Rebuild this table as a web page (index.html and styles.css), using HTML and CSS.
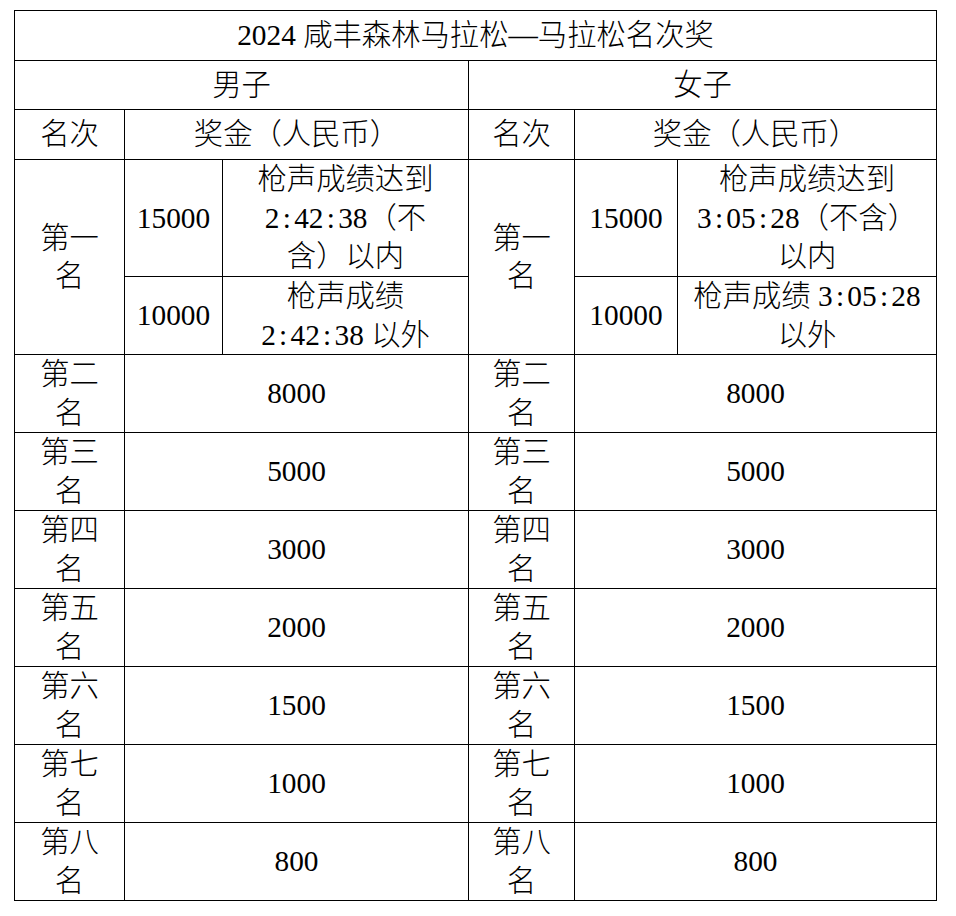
FILE: index.html
```html
<!DOCTYPE html>
<html lang="zh-CN">
<head>
<meta charset="utf-8">
<title>2024 咸丰森林马拉松—马拉松名次奖</title>
<link rel="stylesheet" href="styles.css">
</head>
<body>
<div class="sheet">
  <div class="prize-table">
    <div class="cell span-6">2024 咸丰森林马拉松—马拉松名次奖</div>
    <div class="cell span-3">男子</div>
    <div class="cell span-3">女子</div>

    <div class="cell">名次</div>
    <div class="cell span-2">奖金（人民币）</div>
    <div class="cell">名次</div>
    <div class="cell span-2">奖金（人民币）</div>

    <div class="cell rows-2">第一<br>名</div>
    <div class="cell">15000</div>
    <div class="cell nowrap"><span class="txt">枪声成绩达到<br>2<span class="c">:</span>42<span class="c">:</span>38（不<br>含）以内</span></div>
    <div class="cell rows-2">第一<br>名</div>
    <div class="cell">15000</div>
    <div class="cell nowrap"><span class="txt">枪声成绩达到<br>3<span class="c">:</span>05<span class="c">:</span>28（不含）<br>以内</span></div>

    <div class="cell">10000</div>
    <div class="cell nowrap"><span class="txt">枪声成绩<br>2<span class="c">:</span>42<span class="c">:</span>38 以外</span></div>
    <div class="cell">10000</div>
    <div class="cell nowrap"><span class="txt">枪声成绩 3<span class="c">:</span>05<span class="c">:</span>28<br>以外</span></div>

    <div class="cell">第二<br>名</div>
    <div class="cell span-2">8000</div>
    <div class="cell">第二<br>名</div>
    <div class="cell span-2">8000</div>

    <div class="cell">第三<br>名</div>
    <div class="cell span-2">5000</div>
    <div class="cell">第三<br>名</div>
    <div class="cell span-2">5000</div>

    <div class="cell">第四<br>名</div>
    <div class="cell span-2">3000</div>
    <div class="cell">第四<br>名</div>
    <div class="cell span-2">3000</div>

    <div class="cell">第五<br>名</div>
    <div class="cell span-2">2000</div>
    <div class="cell">第五<br>名</div>
    <div class="cell span-2">2000</div>

    <div class="cell">第六<br>名</div>
    <div class="cell span-2">1500</div>
    <div class="cell">第六<br>名</div>
    <div class="cell span-2">1500</div>

    <div class="cell">第七<br>名</div>
    <div class="cell span-2">1000</div>
    <div class="cell">第七<br>名</div>
    <div class="cell span-2">1000</div>

    <div class="cell">第八<br>名</div>
    <div class="cell span-2">800</div>
    <div class="cell">第八<br>名</div>
    <div class="cell span-2">800</div>
  </div>
</div>
</body>
</html>
```

FILE: styles.css
```css
html, body {
  margin: 0;
  padding: 0;
  background: #ffffff;
}

body {
  font-family: "Liberation Serif", "Noto Sans CJK SC", serif;
  font-size: 29.33px;
  line-height: 38.5px;
  color: #000000;
}

.sheet {
  padding: 10px 0 0 14px;
}

.prize-table {
  display: grid;
  width: max-content;
  grid-template-columns: 110px 98px 246px 106px 103px 259px;
  grid-template-rows: 50px 49px 50px 117px 78px repeat(7, 78px);
  border-top: 1px solid #000;
  border-left: 1px solid #000;
}

.cell {
  box-sizing: border-box;
  display: flex;
  align-items: center;
  justify-content: center;
  text-align: center;
  padding: 0 12px;
  border-right: 1px solid #000;
  border-bottom: 1px solid #000;
  font-weight: 300;
}

.span-2 { grid-column: span 2; }
.span-3 { grid-column: span 3; }
.span-6 { grid-column: span 6; }
.rows-2 { grid-row: span 2; }

.nowrap {
  white-space: nowrap;
  padding: 0;
}

.txt {
  display: block;
}

.c {
  margin: 0 3.26px;
}
```
